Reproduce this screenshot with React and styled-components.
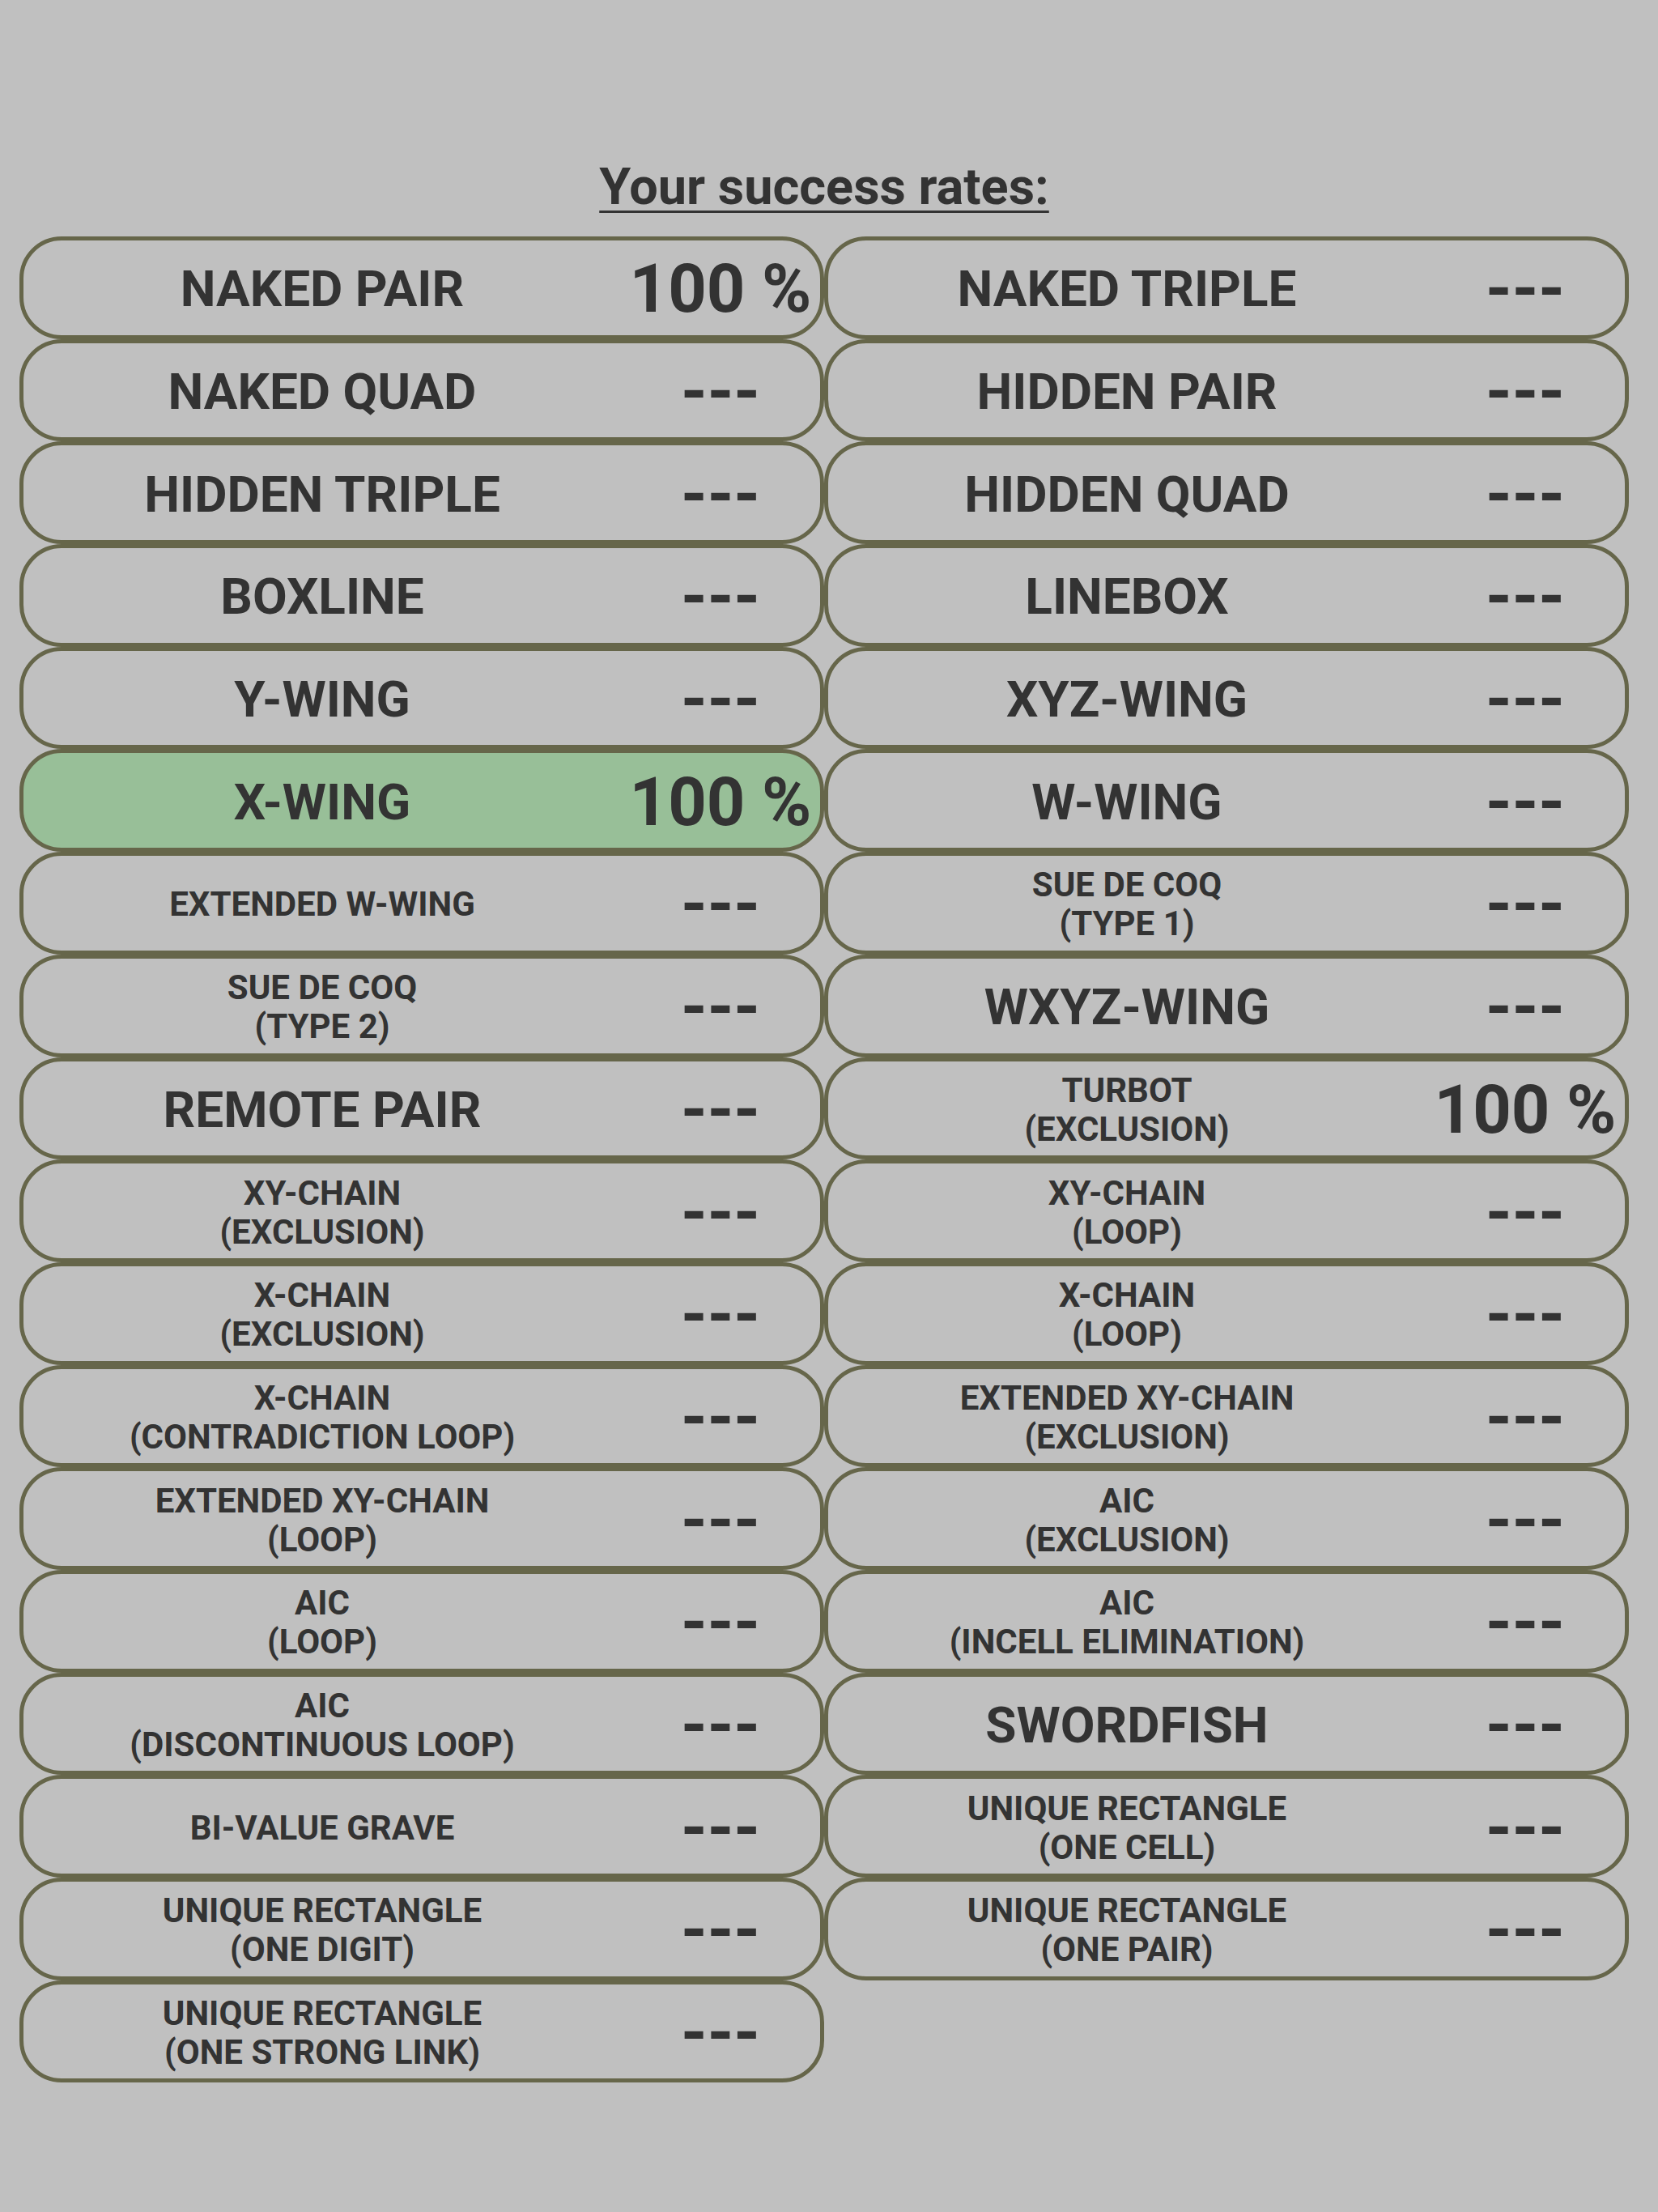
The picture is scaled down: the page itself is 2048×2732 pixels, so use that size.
import React from 'react'
import styled, { createGlobalStyle } from 'styled-components'

const GlobalStyle = createGlobalStyle`
  html, body {
    margin: 0;
    padding: 0;
    background: #c0c0c0;
    min-height: 2732px;
  }
  body {
    font-family: Roboto, "Liberation Sans", sans-serif;
    color: #333333;
  }
`

const Page = styled.div`
  width: 1988px;
  padding: 195px 0 0 24px;
`

const Title = styled.h1`
  margin: 0 0 25px;
  font-size: 63px;
  line-height: 72px;
  font-weight: 700;
  text-align: center;
  text-decoration: underline;
  text-decoration-thickness: 3px;
  text-underline-offset: 8px;
`

const Columns = styled.div`
  display: grid;
  grid-template-columns: 994px 994px;
  align-items: start;
`

const Column = styled.div`
  display: flex;
  flex-direction: column;
`

const Card = styled.div`
  box-sizing: border-box;
  height: 126.7px;
  padding-top: 4px;
  display: flex;
  align-items: center;
  border: 5px solid #66664a;
  border-radius: 52px;
  background: ${p => (p.$done ? '#98bf98' : 'transparent')};
`

const Label = styled.div`
  flex: 0 0 75%;
  text-align: center;
  font-weight: 700;
  font-size: ${p => (p.$small ? '42px' : '62px')};
  line-height: ${p => (p.$small ? '48px' : '72px')};
  white-space: pre-line;
`

const Value = styled.div`
  flex: 1;
  text-align: center;
  font-weight: 700;
  font-size: 83px;
  line-height: 96px;
  white-space: nowrap;
`

const left = [
  { name: 'NAKED PAIR', rate: '100 %' },
  { name: 'NAKED QUAD' },
  { name: 'HIDDEN TRIPLE' },
  { name: 'BOXLINE' },
  { name: 'Y-WING' },
  { name: 'X-WING', rate: '100 %', done: true },
  { name: 'EXTENDED W-WING', small: true },
  { name: 'SUE DE COQ\n(TYPE 2)', small: true },
  { name: 'REMOTE PAIR' },
  { name: 'XY-CHAIN\n(EXCLUSION)', small: true },
  { name: 'X-CHAIN\n(EXCLUSION)', small: true },
  { name: 'X-CHAIN\n(CONTRADICTION LOOP)', small: true },
  { name: 'EXTENDED XY-CHAIN\n(LOOP)', small: true },
  { name: 'AIC\n(LOOP)', small: true },
  { name: 'AIC\n(DISCONTINUOUS LOOP)', small: true },
  { name: 'BI-VALUE GRAVE', small: true },
  { name: 'UNIQUE RECTANGLE\n(ONE DIGIT)', small: true },
  { name: 'UNIQUE RECTANGLE\n(ONE STRONG LINK)', small: true },
]

const right = [
  { name: 'NAKED TRIPLE' },
  { name: 'HIDDEN PAIR' },
  { name: 'HIDDEN QUAD' },
  { name: 'LINEBOX' },
  { name: 'XYZ-WING' },
  { name: 'W-WING' },
  { name: 'SUE DE COQ\n(TYPE 1)', small: true },
  { name: 'WXYZ-WING' },
  { name: 'TURBOT\n(EXCLUSION)', rate: '100 %', small: true },
  { name: 'XY-CHAIN\n(LOOP)', small: true },
  { name: 'X-CHAIN\n(LOOP)', small: true },
  { name: 'EXTENDED XY-CHAIN\n(EXCLUSION)', small: true },
  { name: 'AIC\n(EXCLUSION)', small: true },
  { name: 'AIC\n(INCELL ELIMINATION)', small: true },
  { name: 'SWORDFISH' },
  { name: 'UNIQUE RECTANGLE\n(ONE CELL)', small: true },
  { name: 'UNIQUE RECTANGLE\n(ONE PAIR)', small: true },
]

function TechniqueCard({ item }) {
  return (
    <Card $done={item.done}>
      <Label $small={item.small}>{item.name}</Label>
      <Value>{item.rate || '---'}</Value>
    </Card>
  )
}

export default function App() {
  return (
    <>
      <GlobalStyle />
      <Page>
        <Title>Your success rates:</Title>
        <Columns>
          <Column>
            {left.map((item, i) => <TechniqueCard key={i} item={item} />)}
          </Column>
          <Column>
            {right.map((item, i) => <TechniqueCard key={i} item={item} />)}
          </Column>
        </Columns>
      </Page>
    </>
  )
}
